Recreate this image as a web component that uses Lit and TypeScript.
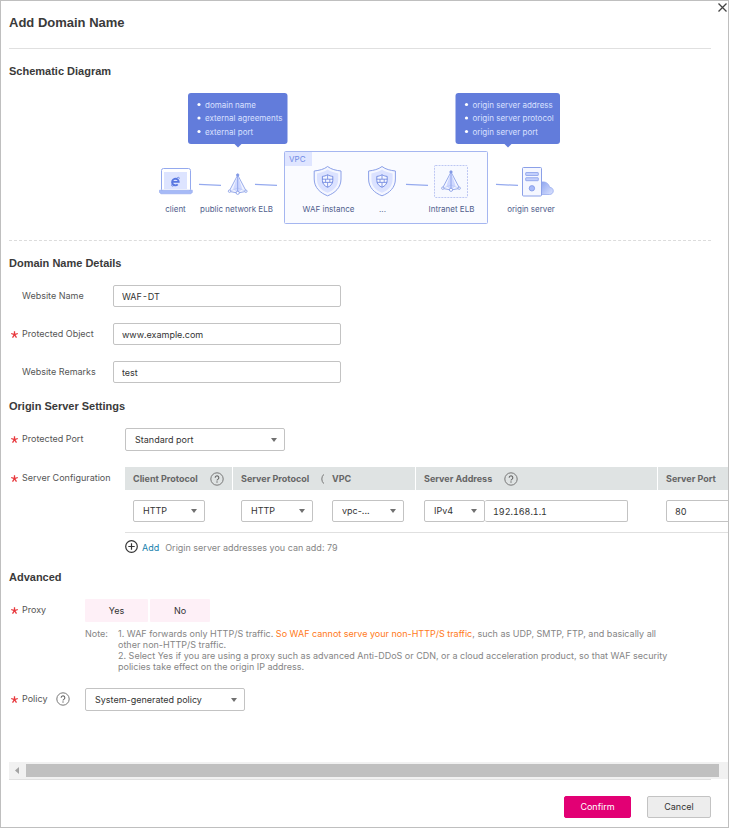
import { LitElement, html, svg, css } from "lit";
import { customElement, property, state } from "lit/decorators.js";

const helpIcon = html`
  <svg class="help" width="14" height="14" viewBox="0 0 14 14" role="img" aria-label="Help">
    <circle cx="7" cy="7" r="6.2" fill="none" stroke="#777" stroke-width="1" />
    <path d="M5.2 5.7a1.8 1.8 0 1 1 2.9 1.4C7.3 7.6 7 7.8 7 8.5" fill="none" stroke="#666" stroke-width="1.1" />
    <rect x="6.4" y="9.4" width="1.2" height="1.2" fill="#666" />
  </svg>
`;

@customElement("select-box")
class SelectBox extends LitElement {
  @property() label = "";
  @property() value = "";

  static styles = css`
    :host {
      display: grid;
      align-items: center;
    }
    .select,
    .caret {
      grid-area: 1 / 1;
    }
    .select {
      appearance: none;
      box-sizing: border-box;
      width: 100%;
      height: 100%;
      margin: 0;
      padding: 0 16px 0 9px;
      border: 1px solid #c3c3c3;
      border-radius: 2px;
      background: #fff;
      color: #333;
      font: inherit;
    }
    .caret {
      justify-self: end;
      margin-right: 7px;
      pointer-events: none;
    }
  `;

  render() {
    return html`
      <select class="select" aria-label=${this.label}>
        <option>${this.value}</option>
      </select>
      <svg class="caret" width="8" height="4" viewBox="0 0 8 4" aria-hidden="true">
        <path d="M1 0h6L4 4z" fill="#707070" />
      </svg>
    `;
  }
}

@customElement("waf-diagram")
class WafDiagram extends LitElement {
  static styles = css`
    :host {
      display: block;
    }
    .drawing {
      display: block;
      margin: 0 auto;
      font-family: Inter, "Liberation Sans", sans-serif;
      font-size: 8px;
    }
    .tip {
      fill: #627cdb;
    }
    .tip-text {
      fill: #d9e0ff;
    }
    .dot {
      fill: #fff;
    }
    .caption {
      fill: #4f5d8c;
      text-anchor: middle;
    }
    .vpc-text {
      fill: #6f8ae6;
    }
  `;

  private tip(x: number, width: number, arrow: number, lines: string[]) {
    return svg`
      <rect class="tip" x=${x} y="93" width=${width} height="51" rx="3" />
      <path class="tip" d="M${arrow - 4} 143.5h8l-4 4z" />
      ${lines.map(
        (line, i) => svg`
          <circle class="dot" cx=${x + 11} cy=${104.5 + i * 13.5} r="1.6" />
          <text class="tip-text" x=${x + 17} y=${107.5 + i * 13.5}>${line}</text>
        `
      )}
    `;
  }

  private link(x: number) {
    return svg`<path d="M${x} 184.4l22 1" stroke="#94a9ee" stroke-width="1.2" />`;
  }

  private prism(x: number, y: number) {
    return svg`
      <g transform="translate(${x} ${y})" stroke="#8298e4" stroke-width="0.8" stroke-linejoin="round">
        <path d="M0 -9L-8.6 7.4L0 9L8.6 7.4z" fill="#f1f4ff" />
        <path d="M0 -9L-4.6 5L0 9L4.6 5z" fill="#cfd8ff" stroke="none" />
        <path d="M-8.6 7.4L0 4L8.6 7.4" fill="none" stroke="#b4c2f5" stroke-width="0.6" />
        <path d="M0 -9V9" fill="none" />
        <circle cx="0" cy="-9" r="1.2" fill="#8298e4" />
        <circle cx="-8.2" cy="7.2" r="1.2" fill="#fff" />
        <circle cx="8.2" cy="7.2" r="1.2" fill="#fff" />
        <circle cx="0" cy="8.8" r="1.6" fill="#fff" />
      </g>
    `;
  }

  private shield(x: number) {
    return svg`
      <g transform="translate(${x} 181)" stroke-linejoin="round">
        <path
          d="M0 -14.5C3.6 -11.6 8.4 -10.6 13.4 -10V-2C13.4 6.6 7.4 12 0 14.8C-7.4 12 -13.4 6.6 -13.4 -2V-10C-8.4 -10.6 -3.6 -11.6 0 -14.5z"
          fill="#f5f7ff" stroke="#8ba0e8" stroke-width="1" />
        <path
          d="M0 -11.4C3 -9.2 7 -8.1 10.6 -7.6V-1.8C10.6 5 6 9.4 0 11.8C-6 9.4 -10.6 5 -10.6 -1.8V-7.6C-7 -8.1 -3 -9.2 0 -11.4z"
          fill="#dbe2ff" />
        <path
          d="M0 -6.3C1.7 -5.2 3.4 -4.8 5.2 -4.6V-0.6C5.2 2.8 3 5 0 6.3C-3 5 -5.2 2.8 -5.2 -0.6V-4.6C-3.4 -4.8 -1.7 -5.2 0 -6.3z"
          fill="#f5f7ff" stroke="#6b84df" stroke-width="0.9" />
        <path d="M-5.2 -1.8H5.2M-5 1.4H5M0 -6V-1.8M-2 -1.8V1.4M2.2 -1.8V1.4M0 1.4V6"
          fill="none" stroke="#6b84df" stroke-width="0.8" />
      </g>
    `;
  }

  render() {
    return html`
      <svg class="drawing" width="402" height="132" viewBox="159 93 402 132">
        <defs>
          <linearGradient id="cloud" x1="0" y1="0" x2="1" y2="1">
            <stop offset="0" stop-color="#8fa6f0" />
            <stop offset="1" stop-color="#dce3ff" />
          </linearGradient>
        </defs>
        ${this.tip(188, 99.5, 238, ["domain name", "external agreements", "external port"])}
        ${this.tip(455.5, 104.5, 508, ["origin server address", "origin server protocol", "origin server port"])}

        <rect x="284.5" y="151.5" width="203" height="72" rx="1" fill="#fafbff" stroke="#a5b6f0" />
        <rect x="285" y="152" width="27" height="14" fill="#dfe5ff" />
        <text class="vpc-text" x="289" y="162">VPC</text>

        <rect x="161.5" y="168.5" width="29" height="23" rx="2" fill="#fff" stroke="#94a9ee" />
        <rect x="164" y="172" width="23" height="17" fill="#dde4ff" />
        <path d="M172.4 181.9h6.3a3.3 3.3 0 1 0 -1 2.5" fill="none" stroke="#5877e0" stroke-width="1.9" />
        <path d="M172.2 183.8c-1.4 2.6 0 2.9 2 1.5M176.6 178.1c1.8-1.1 3.1-1.1 2.6.7"
          fill="none" stroke="#5877e0" stroke-width="0.8" />
        <path d="M159.5 190.2h32.8v2.2l-1.4 1.4h-30l-1.4-1.4z" fill="#a6baf7" stroke="#8fa5ec" stroke-width="0.6" />

        ${this.link(199)} ${this.link(255)} ${this.link(406)} ${this.link(496)}
        ${this.prism(237.7, 184)} ${this.shield(327.6)} ${this.shield(382)}

        <rect x="434.5" y="165.5" width="33" height="32" rx="1" fill="#f7f9ff" stroke="#adbaf0"
          stroke-width="0.8" stroke-dasharray="2 1" />
        ${this.prism(451, 181)}

        <path d="M541.5 194.5V182c4-.6 7.4 1.4 8 5.2c2.4.2 3.8 1.8 3.8 3.7c0 2-1.6 3.6-3.8 3.6z"
          fill="url(#cloud)" stroke="#8fa5ec" stroke-width="0.7" />
        <rect x="522.5" y="167.5" width="19" height="28.5" rx="1" fill="#f5f7ff" stroke="#8ba0e8" />
        <rect x="525.7" y="172.5" width="12.6" height="3" rx="0.5" fill="#c2cffc" stroke="#7d95e6" stroke-width="0.7" />
        <rect x="525.7" y="177.7" width="12.6" height="3" rx="0.5" fill="#c2cffc" stroke="#7d95e6" stroke-width="0.7" />
        <circle cx="531.9" cy="188.3" r="2.7" fill="#a9bbf8" stroke="#7d95e6" stroke-width="0.8" />

        <text class="caption" x="175.5" y="212">client</text>
        <text class="caption" x="236.5" y="212">public network ELB</text>
        <text class="caption" x="328.5" y="212">WAF instance</text>
        <text class="caption" x="382.5" y="212">...</text>
        <text class="caption" x="451.5" y="212">Intranet ELB</text>
        <text class="caption" x="531" y="212">origin server</text>
      </svg>
    `;
  }
}

@customElement("app-root")
class AppRoot extends LitElement {
  @state() private proxy = "";

  static styles = css`
    :host {
      display: block;
      font: 9px/12px Inter, "Liberation Sans", Arial, sans-serif;
      color: #333;
    }
    .dialog {
      position: relative;
      box-sizing: border-box;
      min-height: 100vh;
      display: flex;
      flex-direction: column;
      padding-left: 8px;
      border: 1px solid #bfbfbf;
      background: #fff;
    }
    .close {
      position: absolute;
      top: 1px;
      right: 0;
      padding: 0;
      border: 0;
      background: none;
      line-height: 0;
    }
    .header {
      display: flex;
      align-items: center;
      height: 47px;
      margin-right: 17px;
      border-bottom: 1px solid #e0e0e0;
    }
    .title {
      margin: 0;
      padding-bottom: 4px;
      font: bold 13px/16px "Liberation Sans", Arial, sans-serif;
      color: #3a3a3a;
    }
    .section {
      padding: 14px 0 1px;
    }
    .schematic {
      margin-right: 17px;
      padding-bottom: 15px;
      border-bottom: 1px dashed #dcdcdc;
    }
    .subtitle {
      margin: 0 0 14px;
      font: bold 11px/16px "Liberation Sans", Arial, sans-serif;
      color: #3a3a3a;
    }
    .rows {
      display: grid;
      gap: 16px 0;
    }
    .details {
      grid-template-columns: 104px 228px;
    }
    .origin {
      grid-template-columns: 116px minmax(0, 1fr);
    }
    .advanced {
      grid-template-columns: 76px minmax(0, 1fr);
    }
    .label {
      display: flex;
      align-items: center;
      height: 22px;
      padding-left: 13px;
      color: #555;
      white-space: nowrap;
    }
    .required {
      padding-left: 2px;
    }
    .star {
      width: 11px;
      height: 7px;
      flex: none;
    }
    .help {
      flex: none;
    }
    .label .help {
      margin-left: 9px;
    }
    .field {
      box-sizing: border-box;
      width: 100%;
      height: 22px;
      margin: 0;
      padding: 0 8px;
      border: 1px solid #c3c3c3;
      border-radius: 2px;
      background: #fff;
      color: #333;
      font: inherit;
      font-variant-numeric: tabular-nums;
    }
    .wide {
      width: 160px;
      height: 23px;
    }
    .clip {
      overflow: hidden;
    }
    .servers {
      table-layout: fixed;
      width: 653px;
      border-collapse: separate;
      border-spacing: 0;
    }
    .c1 {
      width: 108px;
    }
    .c2 {
      width: 91px;
    }
    .c3 {
      width: 92px;
    }
    .c4 {
      width: 242px;
    }
    .c5 {
      width: 120px;
    }
    .head {
      box-sizing: border-box;
      height: 23px;
      padding: 0 0 0 8px;
      overflow: hidden;
      background: #dfe3e3;
      color: #666;
      font-weight: 700;
      text-align: left;
    }
    .ruled {
      border-right: 1px solid #fff;
    }
    .head-line {
      display: flex;
      align-items: center;
      gap: 12px;
      white-space: nowrap;
    }
    .cell {
      padding: 10px 0 10px 8px;
      border-bottom: 1px solid #e0e0e0;
    }
    .small {
      width: 72px;
      height: 22px;
    }
    .address {
      display: grid;
      grid-template-columns: 61px 143px;
    }
    .address .field {
      border-left-width: 0;
    }
    .port {
      width: 80px;
    }
    .add-row {
      display: flex;
      align-items: center;
      gap: 4px;
      height: 16px;
      padding-top: 5px;
    }
    .add,
    .hint {
      padding-top: 3px;
    }
    .add {
      color: #1580ad;
      text-decoration: none;
    }
    .hint {
      margin-left: 2px;
      color: #858585;
    }
    .choices {
      display: flex;
      gap: 2px;
    }
    .choice {
      height: 23px;
      width: 60px;
      padding: 0;
      border: 0;
      border-radius: 1px;
      background: #fef0f7;
      color: #333;
      font: inherit;
    }
    .yes {
      width: 63px;
    }
    .note {
      display: grid;
      grid-template-columns: 33px minmax(0, 1fr);
      margin-top: 6px;
      padding-right: 54px;
      color: #858585;
      line-height: 11px;
    }
    .line {
      margin: 0;
    }
    .warn {
      color: #ff7a1a;
    }
    .scrollbar {
      display: flex;
      align-items: center;
      height: 17px;
      margin-top: auto;
      background: #f1f1f1;
    }
    .arrow {
      flex: none;
      width: 17px;
    }
    .thumb {
      flex: 1;
      height: 13px;
      margin-right: 9px;
      background: #c0c0c0;
    }
    .footer {
      display: flex;
      justify-content: flex-end;
      gap: 16px;
      margin-right: 17px;
      padding: 16px 0 9px;
      border-top: 1px solid #e0e0e0;
    }
    .button {
      box-sizing: border-box;
      width: 64px;
      height: 22px;
      padding: 0;
      border: 1px solid #c3c3c3;
      border-radius: 2px;
      background: #ededed;
      color: #333;
      font: inherit;
    }
    .primary {
      width: 67px;
      border-color: #e20074;
      background: #e20074;
      color: #fff;
    }
  `;

  private star() {
    return html`
      <svg class="star" viewBox="0 0 11 7" aria-hidden="true">
        <path d="M3.5 3.6V0.2M3.5 3.6L0.2 2.5M3.5 3.6L6.8 2.5M3.5 3.6L1.5 6.6M3.5 3.6L5.5 6.6"
          stroke="#e8383d" stroke-width="1.3" />
      </svg>
    `;
  }

  private textRow(id: string, label: string, value: string, required = false) {
    return html`
      <label class="label ${required ? "required" : ""}" for=${id}>${required ? this.star() : ""}${label}</label>
      <input class="field" id=${id} type="text" .value=${value} />
    `;
  }

  private pick(value: string) {
    this.proxy = value;
  }

  render() {
    return html`
      <main class="dialog">
        <button class="close" type="button" aria-label="Close">
          <svg width="11" height="11" viewBox="0 0 11 11">
            <path d="M1.5 1.5l8 8M9.5 1.5l-8 8" stroke="#444" stroke-width="1.3" />
          </svg>
        </button>
        <header class="header"><h1 class="title">Add Domain Name</h1></header>

        <section class="section schematic">
          <h2 class="subtitle">Schematic Diagram</h2>
          <waf-diagram></waf-diagram>
        </section>

        <section class="section">
          <h2 class="subtitle">Domain Name Details</h2>
          <div class="rows details">
            ${this.textRow("name", "Website Name", "WAF-DT")}
            ${this.textRow("object", "Protected Object", "www.example.com", true)}
            ${this.textRow("remarks", "Website Remarks", "test")}
          </div>
        </section>

        <section class="section">
          <h2 class="subtitle">Origin Server Settings</h2>
          <div class="rows origin">
            <span class="label required">${this.star()}Protected Port</span>
            <select-box class="wide" label="Protected Port" value="Standard port"></select-box>
            <span class="label required">${this.star()}Server Configuration</span>
            <div class="clip">
              <table class="servers">
                <colgroup>
                  <col class="c1" /><col class="c2" /><col class="c3" /><col class="c4" /><col class="c5" />
                </colgroup>
                <thead>
                  <tr>
                    <th class="head ruled"><div class="head-line">Client Protocol ${helpIcon}</div></th>
                    <th class="head"><div class="head-line">Server Protocol ${helpIcon}</div></th>
                    <th class="head ruled">VPC</th>
                    <th class="head ruled"><div class="head-line">Server Address ${helpIcon}</div></th>
                    <th class="head"><div class="head-line">Server Port ${helpIcon}</div></th>
                  </tr>
                </thead>
                <tbody>
                  <tr>
                    <td class="cell"><select-box class="small" label="Client Protocol" value="HTTP"></select-box></td>
                    <td class="cell"><select-box class="small" label="Server Protocol" value="HTTP"></select-box></td>
                    <td class="cell"><select-box class="small" label="VPC" value="vpc-..."></select-box></td>
                    <td class="cell">
                      <div class="address">
                        <select-box label="Address type" value="IPv4"></select-box>
                        <input class="field" type="text" aria-label="Server Address" .value=${"192.168.1.1"} />
                      </div>
                    </td>
                    <td class="cell"><input class="field port" type="text" aria-label="Server Port" .value=${"80"} /></td>
                  </tr>
                </tbody>
              </table>
              <div class="add-row">
                <svg width="13" height="13" viewBox="0 0 13 13" aria-hidden="true">
                  <circle cx="6.5" cy="6.5" r="5.8" fill="none" stroke="#333" stroke-width="1.2" />
                  <path d="M6.5 3.3v6.4M3.3 6.5h6.4" stroke="#333" stroke-width="1.2" />
                </svg>
                <a class="add" href="#add">Add</a>
                <span class="hint">Origin server addresses you can add: 79</span>
              </div>
            </div>
          </div>
        </section>

        <section class="section">
          <h2 class="subtitle">Advanced</h2>
          <div class="rows advanced">
            <span class="label required">${this.star()}Proxy</span>
            <div>
              <div class="choices" role="group" aria-label="Proxy">
                <button class="choice yes" type="button" aria-pressed=${this.proxy === "yes"} @click=${() => this.pick("yes")}>Yes</button>
                <button class="choice" type="button" aria-pressed=${this.proxy === "no"} @click=${() => this.pick("no")}>No</button>
              </div>
              <div class="note">
                <span>Note:</span>
                <div>
                  <p class="line">
                    1. WAF forwards only HTTP/S traffic.
                    <span class="warn">So WAF cannot serve your non-HTTP/S traffic</span>, such as UDP, SMTP, FTP, and basically all other non-HTTP/S traffic.
                  </p>
                  <p class="line">
                    2. Select Yes if you are using a proxy such as advanced Anti-DDoS or CDN, or a cloud acceleration product, so that WAF security policies take effect on the origin IP address.
                  </p>
                </div>
              </div>
            </div>
            <span class="label required">${this.star()}Policy ${helpIcon}</span>
            <select-box class="wide" label="Policy" value="System-generated policy"></select-box>
          </div>
        </section>

        <div class="scrollbar" aria-hidden="true">
          <svg class="arrow" height="17" viewBox="0 0 17 17"><path d="M10 5v7L6 8.5z" fill="#a3a3a3" /></svg>
          <div class="thumb"></div>
        </div>
        <footer class="footer">
          <button class="button primary" type="button">Confirm</button>
          <button class="button" type="button">Cancel</button>
        </footer>
      </main>
    `;
  }
}
